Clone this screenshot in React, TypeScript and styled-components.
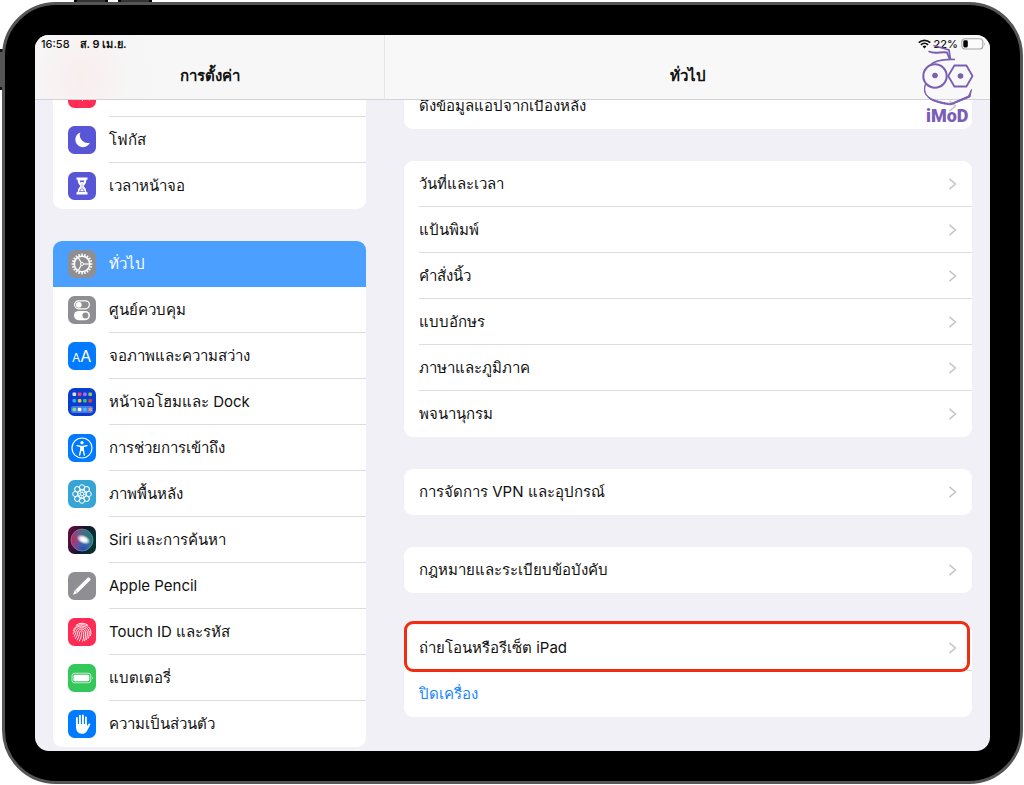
import React from "react";
import styled, { createGlobalStyle, css } from "styled-components";

const GlobalStyle = createGlobalStyle`
  *, *::before, *::after { box-sizing: border-box; }
  body {
    margin: 0;
    background: #fff;
    color: #111;
    font-family: Inter, "Liberation Sans", sans-serif;
  }
  button { font: inherit; color: inherit; }
`;

/* ---------- device ---------- */

const Page = styled.div`
  position: relative;
  display: flex;
  height: 100vh;
  padding: 2px 1px 1px 2px;
  overflow: hidden;
`;

const Body = styled.div`
  position: relative;
  flex: 1;
  display: flex;
  min-width: 0;
  padding: 30px;
  border: 3px solid #555;
  border-radius: 54px;
  background: #000;
`;

const VolumeKey = styled.span<{ $second?: boolean }>`
  position: absolute;
  top: 0;
  left: ${(p) => (p.$second ? 118 : 74)}px;
  width: 34px;
  height: 3px;
  background: #333;
  border: solid #000;
  border-width: 0 3px;
`;

const PowerKey = styled.span`
  position: absolute;
  top: 49px;
  left: 0;
  width: 3px;
  height: 41px;
  background: #555;
  border: solid #111;
  border-width: 3px 0;
`;

const Screen = styled.div`
  position: relative;
  flex: 1;
  display: flex;
  min-width: 0;
  border-radius: 14px;
  overflow: hidden;
  background: #f1f0f7;
`;

/* ---------- panes ---------- */

const paneStyle = css`
  display: flex;
  flex-direction: column;
  min-height: 0;
`;

const Sidebar = styled.nav`
  ${paneStyle}
  flex: 0 0 350px;
`;

const Detail = styled.main`
  ${paneStyle}
  flex: 1;
  min-width: 0;
`;

const PaneHeader = styled.header<{ $tinted?: boolean }>`
  flex: none;
  display: flex;
  flex-direction: column;
  height: 65px;
  border-bottom: 1px solid #d2d1d5;
  border-right: ${(p) => (p.$tinted ? "1px solid #e6e5eb" : "0")};
  background: ${(p) =>
    p.$tinted
      ? "radial-gradient(ellipse 80px 90px at 46px 44px, #f9eeee, rgba(247, 244, 245, 0.5) 60%, transparent), #f7f7f7"
      : "#f8f8f8"};
`;

const StatusBar = styled.div<{ $end?: boolean }>`
  display: flex;
  align-items: center;
  justify-content: ${(p) => (p.$end ? "flex-end" : "flex-start")};
  gap: ${(p) => (p.$end ? 3 : 10)}px;
  height: 18px;
  padding: 0 4px 0 6px;
  font-size: 11px;
  font-weight: 500;
  line-height: 18px;
`;

const StatusDate = styled.span`
  font-weight: 600;
`;

const Title = styled.h1`
  margin: 0;
  padding-top: 11px;
  font-size: 15px;
  font-weight: 700;
  line-height: 24px;
  text-align: center;
`;

const Viewport = styled.div`
  flex: 1;
  min-height: 0;
  overflow: hidden;
`;

const Groups = styled.div<{ $scrolled: number }>`
  display: flex;
  flex-direction: column;
  gap: 32px;
  margin-top: -${(p) => p.$scrolled}px;
  padding-bottom: 32px;

  ${Sidebar} & {
    padding-left: 18px;
    padding-right: 19px;
  }
  ${Detail} & {
    padding-left: 19px;
    padding-right: 18px;
  }
`;

const Group = styled.ul`
  margin: 0;
  padding: 0;
  list-style: none;
  border-radius: 9px;
  background: #fff;
  overflow: hidden;
`;

/* ---------- rows ---------- */

const Item = styled.li`
  display: flex;
`;

const Label = styled.span`
  flex: 1;
  display: flex;
  align-items: center;
  justify-content: space-between;
  min-width: 0;
  height: 46px;
  padding-right: 15px;
  border-bottom: 1px solid #dddce0;
  white-space: nowrap;
`;

const Row = styled.button<{ $selected?: boolean; $action?: boolean }>`
  flex: 1;
  display: flex;
  align-items: center;
  gap: 13px;
  min-width: 0;
  padding: 0 0 0 15px;
  border: 0;
  background: ${(p) => (p.$selected ? "#4ba0ff" : "transparent")};
  color: ${(p) => (p.$selected ? "#fff" : p.$action ? "#1a86fb" : "#111")};
  font-size: 15px;
  line-height: 24px;
  text-align: left;
  cursor: pointer;

  ${Label} {
    ${(p) => p.$selected && "border-color: transparent;"}
  }
  ${Item}:last-child & ${Label} {
    border-color: transparent;
  }
`;

const HighlightScope = styled.div`
  position: relative;
`;

const HighlightFrame = styled.span`
  position: absolute;
  top: -4px;
  right: 2px;
  left: 0;
  height: 51px;
  border: 3px solid #f02d10;
  border-radius: 9px;
  pointer-events: none;
`;

const Tile = styled.svg`
  flex: none;
  display: block;
  width: 28px;
  height: 28px;
`;

const Chevron = () => (
  <svg width="8" height="14" viewBox="0 0 8 14" fill="none" stroke="#c5c5c8" strokeWidth="1.6" aria-hidden="true">
    <path d="M1 2.300l5.500 4.700L1 11.700" strokeLinecap="round" strokeLinejoin="round" />
  </svg>
);

/* ---------- setting icons ---------- */

function Icon({ bg, children }: { bg: string; children: React.ReactNode }) {
  return (
    <Tile viewBox="0 0 28 28" aria-hidden="true">
      <rect width="28" height="28" rx="6.500" fill={bg} />
      {children}
    </Tile>
  );
}

const around = (n: number) => Array.from({ length: n }, (_, i) => (360 / n) * i);

const icons = {
  sound: (
    <Icon bg="#ff2d55">
      <path d="M6 11h4l5-4v14l-5-4H6z" fill="#fff" />
      <path d="M18 10q3 4 0 8M21 8q5 6 0 12" fill="none" stroke="#fff" strokeWidth="1.500" />
    </Icon>
  ),
  focus: (
    <Icon bg="#5856d6">
      <path d="M12.300 6.500a7.600 7.600 0 1 0 9.600 10.200 8 8 0 0 1-9.600-10.200z" fill="#fff" />
    </Icon>
  ),
  screenTime: (
    <Icon bg="#5856d6">
      <path d="M8.500 5.500h11v2.200h-1.200c0 3.300-1.200 4.800-2.900 6.300 1.700 1.500 2.900 3 2.900 6.300h1.200v2.200h-11v-2.200h1.200c0-3.300 1.200-4.800 2.900-6.300-1.700-1.500-2.900-3-2.900-6.300H8.500z" fill="#fff" />
      <path d="M11.600 8.600h4.800l-2 3.800v3.300l2.300 3.200v1.100h-5.400v-1.100l2.300-3.200v-3.300z" fill="#5856d6" />
      <path d="M12.500 10h3l-1 2.300v5l1.700 2h-4.400l1.700-2v-5z" fill="#fff" />
    </Icon>
  ),
  general: (
    <Icon bg="#8e8e93">
      <g stroke="#fff" fill="none">
        {around(20).map((a) => (
          <path key={a} d="M14 3.600v2.600" strokeWidth="1.500" transform={`rotate(${a} 14 14)`} />
        ))}
        <circle cx="14" cy="14" r="7.700" strokeWidth="1.500" />
        <circle cx="14" cy="14" r="1.500" strokeWidth="1" />
        {[90, 210, 330].map((a) => (
          <path key={a} d="M14 12.500V6.500" strokeWidth="1.200" transform={`rotate(${a} 14 14)`} />
        ))}
      </g>
    </Icon>
  ),
  control: (
    <Icon bg="#8e8e93">
      <rect x="6.600" y="4.800" width="14.800" height="8" rx="4" fill="none" stroke="#fff" strokeWidth="1.200" />
      <circle cx="10.800" cy="8.800" r="2.900" fill="#fff" />
      <rect x="6" y="15" width="16" height="9.200" rx="4.600" fill="#fff" />
      <circle cx="17.400" cy="19.600" r="3" fill="#8e8e93" />
    </Icon>
  ),
  display: (
    <Icon bg="#007aff">
      <g fill="#fff" fontFamily="Inter, sans-serif">
        <text x="4" y="19.500" fontSize="12">A</text>
        <text x="12.200" y="19.500" fontSize="16">A</text>
      </g>
    </Icon>
  ),
  home: (
    <Icon bg="#0a3dcd">
      {["#e9e4f5", "#f0467a", "#a070f5", "#8fce5a", "#25b2f0", "#f7c236", "#3cc66c", "#e8403a"].map((c, i) => (
        <rect key={c} x={4.5 + (i % 4) * 5.3} y={4.5 + Math.floor(i / 4) * 6.5} width="3.600" height="3.600" rx="1" fill={c} />
      ))}
      <rect x="3" y="18" width="22" height="7" rx="2" fill="#4a79df" />
      {["#6ce08c", "#fff", "#4fb5ff", "#dc9686"].map((c, i) => (
        <rect key={c} x={4.5 + i * 5.3} y="19.700" width="3.600" height="3.600" rx="1" fill={c} />
      ))}
    </Icon>
  ),
  accessibility: (
    <Icon bg="#007aff">
      <circle cx="14" cy="14" r="10" fill="none" stroke="#fff" strokeWidth="1.200" />
      <circle cx="14" cy="8.700" r="1.600" fill="#fff" />
      <path d="M9 11.600l3.800.9v3.500l-1.200 5M19 11.600l-3.800.9v3.500l1.200 5" fill="none" stroke="#fff" strokeWidth="1.400" strokeLinecap="round" strokeLinejoin="round" />
      <path d="M12.400 11.900h3.200v5h-3.200z" fill="#fff" />
    </Icon>
  ),
  wallpaper: (
    <Icon bg="#36a5d6">
      <g fill="none" stroke="#fff" strokeWidth="1">
        {around(8).map((a) => (
          <g key={a} transform={`rotate(${a} 14 14)`}>
            <circle cx="14" cy="7.300" r="2.600" />
            <path d="M14 11.500l1.700-1.700" />
          </g>
        ))}
        <circle cx="14" cy="14" r="4.200" />
        <circle cx="14" cy="14" r="1.800" />
      </g>
    </Icon>
  ),
  siri: (
    <Tile viewBox="0 0 28 28" aria-hidden="true">
      <defs>
        <linearGradient id="siriTile" x1="0" y1=".2" x2="1" y2=".5">
          <stop offset="0" stopColor="#6b0b3c" />
          <stop offset=".5" stopColor="#171233" />
          <stop offset="1" stopColor="#04332f" />
        </linearGradient>
        <linearGradient id="siriOrb" x1="0" y1=".6" x2="1" y2=".3">
          <stop offset="0" stopColor="#c92262" />
          <stop offset=".45" stopColor="#6d5a88" />
          <stop offset="1" stopColor="#0f8378" />
        </linearGradient>
        <radialGradient id="siriBlue" cx=".55" cy=".95" r=".55">
          <stop offset="0" stopColor="#164fb4" />
          <stop offset="1" stopColor="#2a7de0" stopOpacity="0" />
        </radialGradient>
        <radialGradient id="siriGlow">
          <stop offset="0" stopColor="#fff" />
          <stop offset=".45" stopColor="#fff" stopOpacity=".9" />
          <stop offset="1" stopColor="#fff" stopOpacity="0" />
        </radialGradient>
      </defs>
      <rect width="28" height="28" rx="6.500" fill="url(#siriTile)" />
      <circle cx="14" cy="14" r="11" fill="url(#siriOrb)" />
      <circle cx="14" cy="14" r="11" fill="url(#siriBlue)" stroke="#7da5a8" strokeOpacity=".7" strokeWidth=".8" />
      <ellipse cx="15.500" cy="13.500" rx="7.500" ry="4.500" fill="url(#siriGlow)" transform="rotate(24 15.500 13.500)" />
    </Tile>
  ),
  pencil: (
    <Icon bg="#8e8e93">
      <path d="M5 22.800l1.500-4L19.300 6c1.800-1.600 4.300.8 2.700 2.600L9.100 21.300z" fill="#fff" />
      <path d="M7.200 18.600l2.300 2.300" stroke="#8e8e93" strokeWidth=".7" />
    </Icon>
  ),
  touchId: (
    <Icon bg="#ff2d55">
      <g fill="none" stroke="#fff" strokeWidth=".9" strokeLinecap="round">
        <path d="M8.200 7.200a9 9 0 0 1 11.600 0" />
        <path d="M5.400 12.500C7 4.800 21 4.600 22.700 12.800c.3 1.600.2 3.500-.2 5" />
        <path d="M5.200 15.800c.6-1 1-2.300 1.300-3.300 1.600-6 13-6.100 14.500.6.500 2.300.1 5-.6 7" />
        <path d="M6 18.600c1.200-1.500 1.700-3.600 2.100-5.300 1.200-4.900 9.900-4.900 11.100.2.600 2.700 0 6-.9 8.300" />
        <path d="M7.400 20.600c1.400-1.800 2-4.300 2.500-6.700.8-3.600 6.600-3.600 7.500 0 .6 2.700.1 6.200-.9 8.900" />
        <path d="M9.200 22c1.300-2 2-4.700 2.500-7.600.4-2 3.400-2 3.900 0 .5 2.900-.1 6.300-1 8.800" />
        <path d="M11.300 23c1.500-2.500 2.200-5.300 2.400-8.300" />
      </g>
    </Icon>
  ),
  battery: (
    <Icon bg="#34c759">
      <rect x="4" y="9.200" width="18.800" height="9.600" rx="2.500" fill="none" stroke="#fff" strokeOpacity=".7" />
      <rect x="5.500" y="10.700" width="15.800" height="6.600" rx="1.200" fill="#fff" />
      <path d="M24 12.300q1.600 1.700 0 3.400z" fill="#fff" fillOpacity=".8" />
    </Icon>
  ),
  privacy: (
    <Icon bg="#007aff">
      <g stroke="#fff" strokeWidth="1.900" strokeLinecap="round" fill="none">
        <path d="M8.900 8v9M11.900 5.600V15M14.900 5.400V15M17.900 7.400V16" />
        <path d="M18.200 19l3.200-4.600" />
      </g>
      <path d="M8 14h10.900v3.200l1.600-1.600 1 .6-2.800 5.200c-2 3.400-8.300 3.200-9.900-.6-.6-1.600-.8-3.600-.8-6.800z" fill="#fff" />
    </Icon>
  ),
};

/* ---------- status and watermark drawings ---------- */

const Wifi = () => (
  <svg width="13" height="10" viewBox="0 0 13 10" fill="none" stroke="#111" strokeWidth="1.800" aria-label="Wi-Fi">
    <path d="M.8 3.600a8.300 8.300 0 0 1 11.400 0M2.900 5.900a5.200 5.200 0 0 1 7.200 0" />
    <path d="M4.600 7.500a2.800 2.800 0 0 1 3.800 0L6.500 9.500z" fill="#111" stroke="none" />
  </svg>
);

const BatteryLevel = () => (
  <svg width="25" height="12" viewBox="0 0 25 12" fill="none" aria-label="22%">
    <rect x=".8" y=".8" width="21" height="10.200" rx="3" fill="#fcfcfc" stroke="#a4a4a6" strokeWidth="1.100" />
    <rect x="2.300" y="2.300" width="4.500" height="7.200" rx="1.400" fill="#000" />
    <path d="M23.200 4.200q1.700 1.700 0 3.500z" fill="#a4a4a6" />
  </svg>
);

const WatermarkArt = styled.svg`
  position: absolute;
  top: 9px;
  right: 13px;
  width: 56px;
  height: 82px;
  pointer-events: none;
`;

const Watermark = () => (
  <WatermarkArt viewBox="0 0 56 82" fill="none" stroke="#7a5eb4" aria-label="iMoD">
    <path d="M12.500 1.500l15.500 4.500 1.500 10" strokeWidth="1.700" />
    <path d="M7.500 7.200c6 3.500 12 .2 18.500 1.300l2.600 6.500" strokeWidth="1.900" />
    <path d="M8 22c5-5.500 15-7 26-6.500" strokeWidth="1.600" />
    <circle cx="14" cy="32" r="11.700" strokeWidth="2" />
    <path d="M27.200 32l6.200-10.500h12L51.500 32l-6.100 10.500h-12z" strokeWidth="1.800" />
    <circle cx="14" cy="31.500" r="2.800" fill="#7a5eb4" stroke="none" />
    <circle cx="39.500" cy="32" r="2.800" fill="#7a5eb4" stroke="none" />
    <path d="M4.500 40c-3 9 2.500 14 9 16 6 2 13 3.500 16.500 3.500l17.500-7.500 3-6.500-1.500 7.500-19 7.800c-6-.3-13-2-18.500-4.300C5.500 53 1.500 49 4.500 40z" fill="#7a5eb4" strokeWidth="1" strokeLinejoin="round" />
    <text x="5" y="78" fontFamily="Roboto, sans-serif" fontWeight="900" fontSize="18" fill="#7a5eb4" stroke="none">iMoD</text>
  </WatermarkArt>
);

/* ---------- data ---------- */

type IconName = keyof typeof icons;

const sidebarGroups: { icon: IconName; text: string }[][] = [
  [
    { icon: "sound", text: "เสียง" },
    { icon: "focus", text: "โฟกัส" },
    { icon: "screenTime", text: "เวลาหน้าจอ" },
  ],
  [
    { icon: "general", text: "ทั่วไป" },
    { icon: "control", text: "ศูนย์ควบคุม" },
    { icon: "display", text: "จอภาพและความสว่าง" },
    { icon: "home", text: "หน้าจอโฮมและ Dock" },
    { icon: "accessibility", text: "การช่วยการเข้าถึง" },
    { icon: "wallpaper", text: "ภาพพื้นหลัง" },
    { icon: "siri", text: "Siri และการค้นหา" },
    { icon: "pencil", text: "Apple Pencil" },
    { icon: "touchId", text: "Touch ID และรหัส" },
    { icon: "battery", text: "แบตเตอรี่" },
    { icon: "privacy", text: "ความเป็นส่วนตัว" },
  ],
];

const detailGroups: string[][] = [
  ["ดึงข้อมูลแอปจากเบื้องหลัง"],
  ["วันที่และเวลา", "แป้นพิมพ์", "คำสั่งนิ้ว", "แบบอักษร", "ภาษาและภูมิภาค", "พจนานุกรม"],
  ["การจัดการ VPN และอุปกรณ์"],
  ["กฎหมายและระเบียบข้อบังคับ"],
];

export default function App() {
  return (
    <Page>
      <GlobalStyle />
      <VolumeKey />
      <VolumeKey $second />
      <PowerKey />
      <Body>
        <Screen>
          <Sidebar>
            <PaneHeader $tinted>
              <StatusBar>
                <span>16:58</span>
                <StatusDate>ส. 9 เม.ย.</StatusDate>
              </StatusBar>
              <Title>การตั้งค่า</Title>
            </PaneHeader>
            <Viewport>
              <Groups $scrolled={29}>
                {sidebarGroups.map((rows, g) => (
                  <Group key={g}>
                    {rows.map((row) => (
                      <Item key={row.text}>
                        <Row $selected={row.icon === "general"}>
                          {icons[row.icon]}
                          <Label>{row.text}</Label>
                        </Row>
                      </Item>
                    ))}
                  </Group>
                ))}
              </Groups>
            </Viewport>
          </Sidebar>
          <Detail>
            <PaneHeader>
              <StatusBar $end>
                <Wifi />
                <span>22%</span>
                <BatteryLevel />
              </StatusBar>
              <Title>ทั่วไป</Title>
            </PaneHeader>
            <Viewport>
              <Groups $scrolled={17}>
                {detailGroups.map((rows) => (
                  <Group key={rows[0]}>
                    {rows.map((text) => (
                      <Item key={text}>
                        <Row>
                          <Label>
                            {text}
                            <Chevron />
                          </Label>
                        </Row>
                      </Item>
                    ))}
                  </Group>
                ))}
                <HighlightScope>
                  <Group>
                    <Item>
                      <Row>
                        <Label>
                          ถ่ายโอนหรือรีเซ็ต iPad
                          <Chevron />
                        </Label>
                      </Row>
                    </Item>
                    <Item>
                      <Row $action>
                        <Label>ปิดเครื่อง</Label>
                      </Row>
                    </Item>
                  </Group>
                  <HighlightFrame />
                </HighlightScope>
              </Groups>
            </Viewport>
          </Detail>
          <Watermark />
        </Screen>
      </Body>
    </Page>
  );
}
